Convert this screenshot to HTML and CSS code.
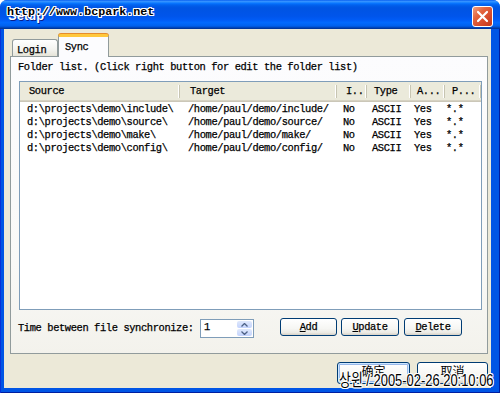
FILE: index.html
```html
<!DOCTYPE html>
<html>
<head>
<meta charset="utf-8">
<link rel="stylesheet" href="styles.css">
</head>
<body>
<div class="window">
  <div class="titlebar">
    <span class="title">Setup</span>
    <span class="close">
      <svg width="13" height="13" viewBox="0 0 13 13"><path d="M2 2 L11 11 M11 2 L2 11" stroke="#fff" stroke-width="2.2" stroke-linecap="round"/></svg>
    </span>
  </div>
  <div class="frame">
    <div class="client">
      <div class="tabs">
        <div class="tab">Login</div>
        <div class="tab tab-active">Sync</div>
      </div>
      <div class="panel">
        <p class="caption">Folder list. (Click right button for edit the folder list)</p>
        <div class="list">
          <div class="row head">
            <div class="c c1">Source</div>
            <div class="c c2">Target</div>
            <div class="c c3">I..</div>
            <div class="c c4">Type</div>
            <div class="c c5">A...</div>
            <div class="c c6">P...</div>
          </div>
          <div class="rows">
            <div class="row"><div class="c c1">d:\projects\demo\include\</div><div class="c c2">/home/paul/demo/include/</div><div class="c c3">No</div><div class="c c4">ASCII</div><div class="c c5">Yes</div><div class="c c6">*.*</div></div>
            <div class="row"><div class="c c1">d:\projects\demo\source\</div><div class="c c2">/home/paul/demo/source/</div><div class="c c3">No</div><div class="c c4">ASCII</div><div class="c c5">Yes</div><div class="c c6">*.*</div></div>
            <div class="row"><div class="c c1">d:\projects\demo\make\</div><div class="c c2">/home/paul/demo/make/</div><div class="c c3">No</div><div class="c c4">ASCII</div><div class="c c5">Yes</div><div class="c c6">*.*</div></div>
            <div class="row"><div class="c c1">d:\projects\demo\config\</div><div class="c c2">/home/paul/demo/config/</div><div class="c c3">No</div><div class="c c4">ASCII</div><div class="c c5">Yes</div><div class="c c6">*.*</div></div>
          </div>
        </div>
        <div class="controls">
          <span class="label">Time between file synchronize:</span>
          <div class="spin">
            <span class="val">1</span>
            <span class="arrows">
              <span class="arr"><svg width="7" height="4" viewBox="0 0 7 4"><path d="M0.5 3.5 L3.5 0.5 L6.5 3.5" fill="none" stroke="#4D6185" stroke-width="1.3"/></svg></span>
              <span class="arr"><svg width="7" height="4" viewBox="0 0 7 4"><path d="M0.5 0.5 L3.5 3.5 L6.5 0.5" fill="none" stroke="#4D6185" stroke-width="1.3"/></svg></span>
            </span>
          </div>
          <span class="btn b-add"><u>A</u>dd</span>
          <span class="btn b-upd"><u>U</u>pdate</span>
          <span class="btn b-del"><u>D</u>elete</span>
        </div>
      </div>
      <div class="footer">
        <span class="btn big default">确定</span>
        <span class="btn big cancel">取消</span>
      </div>
    </div>
  </div>
  <div class="wm-url">http://www.bcpark.net</div>
  <div class="wm-stamp">상윈 / 2005-02-26 20:10:06</div>
</div>
</body>
</html>
```

FILE: styles.css
```css
html, body {
  margin: 0;
  padding: 0;
  background: #ffffff;
}
body {
  width: 500px;
  height: 393px;
  overflow: hidden;
}
.window {
  position: relative;
  width: 500px;
  height: 393px;
  background: #0055E5;
  border-radius: 7px 7px 0 0;
  display: flex;
  flex-direction: column;
  overflow: hidden;
  font-family: "Liberation Mono", "Courier New", monospace;
  font-size: 10.4px;
  letter-spacing: -0.38px;
  color: #000;
  -webkit-text-stroke: 0.25px #000;
}
.titlebar {
  height: 29px;
  flex: none;
  display: flex;
  justify-content: space-between;
  align-items: flex-start;
  padding: 0 7px 0 8px;
  box-sizing: border-box;
  background: linear-gradient(to bottom, #0058EE 0%, #3A93FF 4%, #288EFF 7%, #127DFF 10%, #036FFC 13%, #0262EE 17%, #0057E5 24%, #0054E3 30%, #0055EB 56%, #005BF5 68%, #026AFE 78%, #0062EF 88%, #0052D6 93%, #0040AB 96%, #003092 100%);
}
.title {
  margin-top: 8px;
  font-family: "Liberation Sans", sans-serif;
  font-weight: bold;
  font-size: 13px;
  letter-spacing: 0;
  color: #fff;
  -webkit-text-stroke: 0;
  text-shadow: 1px 1px 0 #0A1E8C;
}
.close {
  margin-top: 6px;
  width: 21px;
  height: 21px;
  box-sizing: border-box;
  border: 1px solid #fff;
  border-radius: 3px;
  background: linear-gradient(135deg, #F0A080 0%, #E3643E 35%, #D5482A 70%, #C0391C 100%);
  display: flex;
  align-items: center;
  justify-content: center;
}
.frame {
  flex: 1;
  display: flex;
  padding: 0 9px 5px 4px;
  box-shadow: inset 1px 0 0 #0831D9, inset -1px 0 0 #001EA0, inset 0 -1px 0 #001EA0;
}
.client {
  flex: 1;
  background: #ECE9D8;
  display: flex;
  flex-direction: column;
  padding: 0 3px 0 6px;
}
.tabs {
  height: 27px;
  flex: none;
  display: flex;
  align-items: flex-end;
  padding-left: 2px;
}
.tab {
  width: 46px;
  height: 17px;
  box-sizing: border-box;
  border: 1px solid #919B9C;
  border-bottom: none;
  border-radius: 3px 3px 0 0;
  background: linear-gradient(#FFFFFF, #F3F3EF 60%, #E6E4D8);
  padding: 5px 0 0 4px;
  line-height: 11px;
}
.tab-active {
  width: 51px;
  height: 23px;
  margin-bottom: -1px;
  position: relative;
  z-index: 1;
  border-top: 3px solid #FFC83C;
  border-left-color: #919B9C;
  background: #FCFCFE;
  box-shadow: 0 -1px 0 #E68B2C;
  padding: 5px 0 0 6px;
  border-radius: 3px 3px 0 0;
}
.panel {
  height: 298px;
  flex: none;
  box-sizing: border-box;
  border: 1px solid #919B9C;
  background: linear-gradient(#FCFCFE 0%, #F9F9F7 70%, #F3F2EC 100%);
  display: flex;
  flex-direction: column;
  padding: 4px 5px 0 7px;
}
.caption {
  margin: 0;
  line-height: 13px;
  height: 13px;
}
.list {
  margin: 7px 0 0 1px;
  height: 229px;
  box-sizing: border-box;
  border: 1px solid #7F9DB9;
  background: #fff;
}
.row {
  display: flex;
  height: 13px;
  line-height: 13px;
  white-space: nowrap;
}
.row.head {
  height: 20px;
  line-height: 19px;
  background: #EBEADB;
  box-shadow: inset 0 -1px 0 #CBC7B8, inset 0 -2px 0 #D6D2C2;
}
.rows {
  padding-top: 1px;
}
.c {
  box-sizing: border-box;
  overflow: hidden;
  padding-left: 6px;
}
.head .c {
  padding-left: 8px;
  background: linear-gradient(#C7C5B2, #C7C5B2) no-repeat right 0 top 3px / 1px 13px,
              linear-gradient(#FFFFFF, #FFFFFF) no-repeat right 1px top 3px / 1px 13px;
}
.c1 { width: 160px; padding-left: 7px; }
.c2 { width: 157px; padding-left: 8px; }
.c3 { width: 30px; }
.c4 { width: 44px; padding-left: 5px; }
.c5 { width: 34px; padding-left: 3px; }
.c6 { width: 36px; padding-left: 1px; }
.head .c1 { padding-left: 9px; }
.head .c2 { padding-left: 10px; }
.head .c3 { padding-left: 9px; }
.head .c4 { padding-left: 7px; }
.head .c5 { padding-left: 6px; }
.head .c6 { padding-left: 7px; }
.controls {
  margin-top: 8px;
  height: 19px;
  display: flex;
  align-items: flex-start;
}
.label {
  width: 182px;
  flex: none;
  line-height: 13px;
  margin-top: 4px;
}
.spin {
  width: 54px;
  height: 19px;
  margin-top: 1px;
  box-sizing: border-box;
  border: 1px solid #7F9DB9;
  background: #fff;
  display: flex;
  justify-content: space-between;
}
.val {
  padding-left: 3px;
  line-height: 15px;
}
.arrows {
  width: 15px;
  display: flex;
  flex-direction: column;
  padding: 1px;
  gap: 1px;
}
.arr {
  flex: 1;
  border-radius: 2px;
  background: linear-gradient(#E0E9FC, #C3D3FD);
  display: flex;
  align-items: center;
  justify-content: center;
}
.btn {
  height: 18px;
  box-sizing: border-box;
  border: 1px solid #003C74;
  border-radius: 3px;
  background: linear-gradient(#FFFFFF 0%, #F6F6F3 60%, #EBEAE4 85%, #D6D0C5 100%);
  display: flex;
  align-items: center;
  justify-content: center;
  line-height: 13px;
}
.b-add { width: 57px; margin-left: 26px; }
.b-upd { width: 58px; margin-left: 4px; }
.b-del { width: 58px; margin-left: 5px; }
.footer {
  margin-top: 8px;
  display: flex;
  justify-content: flex-end;
  gap: 7px;
}
.btn.big {
  height: 22px;
  font-family: "Noto Sans CJK SC", sans-serif;
  font-size: 12px;
  letter-spacing: 0;
  -webkit-text-stroke: 0;
  align-items: flex-start;
  padding-top: 1px;
}
.default {
  width: 73px;
  box-shadow: inset 0 0 0 1px #CEE7FF, inset 0 0 0 2px #98B8EA;
}
.cancel {
  width: 71px;
}
.wm-url {
  position: absolute;
  left: 7px;
  top: 4px;
  font-family: "Liberation Mono", monospace;
  font-weight: bold;
  font-size: 11.7px;
  letter-spacing: 0;
  line-height: 16px;
  color: #000;
  -webkit-text-stroke: 0;
  text-shadow: 1px 0 0 #fff, -1px 0 0 #fff, 0 1px 0 #fff, 0 -1px 0 #fff, 1px 1px 0 #fff, -1px -1px 0 #fff, 1px -1px 0 #fff, -1px 1px 0 #fff;
}
.wm-stamp {
  position: absolute;
  left: 339px;
  top: 371px;
  font-family: "Liberation Sans", "Noto Sans CJK KR", sans-serif;
  font-size: 17px;
  line-height: 20px;
  letter-spacing: 0;
  white-space: nowrap;
  color: #000;
  -webkit-text-stroke: 0;
  transform: scaleX(0.76);
  transform-origin: left top;
  text-shadow: 1px 0 0 #fff, -1px 0 0 #fff, 0 1px 0 #fff, 0 -1px 0 #fff, 1px 1px 0 #fff, -1px -1px 0 #fff, 1px -1px 0 #fff, -1px 1px 0 #fff;
}
```
